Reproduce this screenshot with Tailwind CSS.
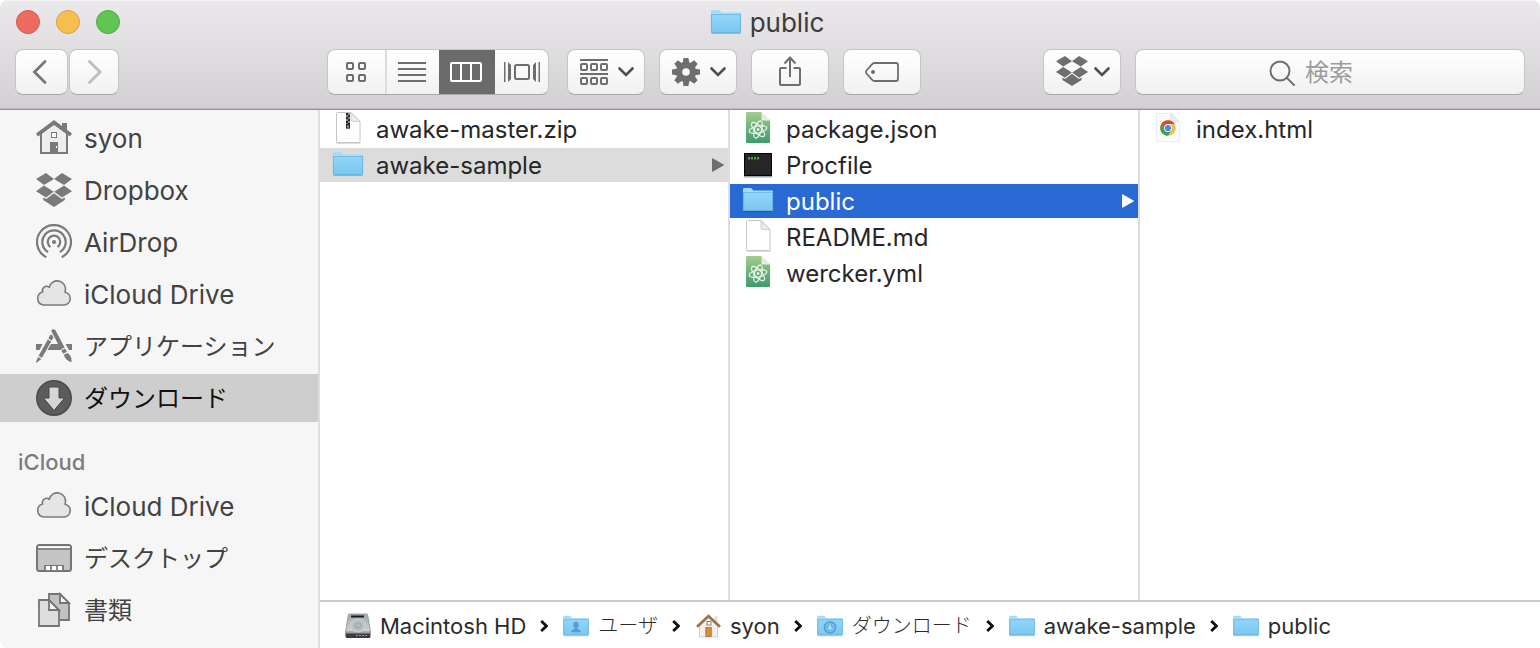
<!DOCTYPE html>
<html lang="ja">
<head>
<meta charset="utf-8">
<title>public</title>
<script src="https://cdn.jsdelivr.net/npm/@tailwindcss/browser@4"></script>
</head>
<body class="bg-white font-['Inter','Noto_Sans_CJK_JP',sans-serif]">
<svg class="absolute size-0" aria-hidden="true">
  <defs>
    <linearGradient id="gFolder" x1="0" y1="0" x2="0" y2="1"><stop offset="0" stop-color="#93d5f9"/><stop offset="1" stop-color="#7ac6f1"/></linearGradient>
    <linearGradient id="gAtom" x1="0" y1="0" x2="0" y2="1"><stop offset="0" stop-color="#a3cd8c"/><stop offset="1" stop-color="#3f9a70"/></linearGradient>
    <linearGradient id="gDisk" x1="0" y1="0" x2="0" y2="1"><stop offset="0" stop-color="#a4aaac"/><stop offset="1" stop-color="#cdd3d5"/></linearGradient>
    <symbol id="folder" viewBox="0 0 32 26" preserveAspectRatio="xMidYMin">
      <path d="M1.500 24.400h29" stroke="#000" stroke-opacity=".22" stroke-width="1.200"/>
      <path d="M1 2.200Q1 1 2.200 1H8.400q.8 0 1.300.6l1.100 1.300q.5.6 1.300.6H30q1 0 1 1V23H1z" fill="#a4dbf9"/>
      <path d="M1 5.500h30V23q0 1-1 1H2q-1 0-1-1z" fill="url(#gFolder)"/>
      <path d="M1 5.500h30" stroke="#69b6e2" stroke-width=".8"/>
      <path d="M1.400 5V22.800q0 .8.8.8h27.600q.8 0 .8-.8V5" fill="none" stroke="#62b0dc" stroke-width=".8"/>
    </symbol>
    <symbol id="page" viewBox="0 0 32 34" preserveAspectRatio="xMidYMin">
      <path d="M4.500 31h24" stroke="#000" stroke-opacity=".25"/>
      <path d="M4.500 1.500q0-1 1-1H19L28 9.500V29.500q0 1-1 1H5.500q-1 0-1-1z" fill="#fff" stroke="#c4c4c4"/>
      <path d="M19 .8V8q0 1.500 1.500 1.500H28z" fill="#ececec" stroke="#c8c8c8" stroke-width=".8"/>
    </symbol>
    <symbol id="atom" viewBox="0 0 32 34" preserveAspectRatio="xMidYMin">
      <path d="M4 1q0-1 1-1H19.500L28 8.500V30q0 1-1 1H5q-1 0-1-1z" fill="url(#gAtom)"/>
      <path d="M19.500 0V7.500q0 1 1 1H28z" fill="#e6efdf"/>
      <g fill="none" stroke="#f1faf2" stroke-width="1.100">
        <ellipse cx="16" cy="17.500" rx="9" ry="3.500" transform="rotate(-12 16 17.500)"/>
        <ellipse cx="16" cy="17.500" rx="9" ry="3.500" transform="rotate(48 16 17.500)"/>
        <ellipse cx="16" cy="17.500" rx="9" ry="3.500" transform="rotate(108 16 17.500)"/>
      </g>
      <circle cx="16" cy="17.500" r="1.300" fill="#fff"/>
    </symbol>
    <symbol id="cloud" viewBox="0 0 36 36" preserveAspectRatio="xMidYMin">
      <path d="M7.500 29A6.600 6.600 0 0 1 6.600 16.100A4.300 4.300 0 0 1 13.300 11.300A8 8 0 0 1 29.300 14.800Q29.300 15.600 29.100 16.200A6.500 6.500 0 0 1 28.500 29z" fill="#e5e5e5" stroke="#7a7a7a" stroke-width="1.600" stroke-linejoin="round"/>
    </symbol>
    <symbol id="dropbox" viewBox="0 0 36 36" preserveAspectRatio="xMidYMin">
      <path d="M0 7L10 1 18 7 8 13zM36 7L26 1 18 7 28 13zM0 19.200L8 13.400 17.800 19.700 10 25.600zM36 19.200L28 13.400 18.200 19.700 26 25.600zM18 21.200L25.800 27 28.800 25.600V28L18 35 7.200 28V25.600L10.200 27z"/>
    </symbol>
    <symbol id="chevdown" viewBox="0 0 16 10"><path d="M1.500 1.500L8 8 14.500 1.500" fill="none" stroke="#4e4e4e" stroke-width="2.600" stroke-linecap="round"/></symbol>
    <symbol id="sep" viewBox="0 0 8 12"><path d="M1.200 1L6.400 6 1.200 11" fill="none" stroke="#111" stroke-width="2.800"/></symbol>
  </defs>
</svg>

<div class="flex min-h-screen flex-col overflow-hidden rounded-lg bg-white">
  <header class="flex h-[110px] flex-none flex-col border-b border-[#939193] bg-gradient-to-b from-[#ece9ec] to-[#d2d0d3] shadow-[inset_0_1px_0_#f6f5f6,inset_0_-1px_0_#bebcbe]">
    <div class="grid h-[46px] flex-none grid-cols-[1fr_auto_1fr] items-center pl-4 pr-[22px]">
      <div class="flex gap-4 pb-[2px]">
        <button aria-label="閉じる" class="size-6 rounded-full border border-[#d9564c] bg-[#ec6a5f]"></button>
        <button aria-label="しまう" class="size-6 rounded-full border border-[#d9a03f] bg-[#f5bf4f]"></button>
        <button aria-label="拡大" class="size-6 rounded-full border border-[#4dab3f] bg-[#61c554]"></button>
      </div>
      <h1 class="flex items-center gap-2 text-[26px] leading-8 text-[#3d3b3d]"><svg class="h-7 w-8"><use href="#folder"/></svg>public</h1>
    </div>

    <div class="flex h-[52px] flex-none items-center px-[15px]">
      <div class="flex gap-px">
        <button aria-label="戻る" class="flex h-[46px] w-[53px] items-center justify-center rounded-lg border border-[#c6c4c7] border-b-[#a9a7aa] bg-gradient-to-b from-white to-[#f1f1f1] pr-1"><svg class="h-6 w-4" viewBox="0 0 16 24" fill="none" stroke="#777" stroke-width="2.800" stroke-linecap="round"><path d="M13 1.500L2.500 12 13 22.500"/></svg></button>
        <button aria-label="進む" class="flex h-[46px] w-[50px] items-center justify-center rounded-lg border border-[#c6c4c7] border-b-[#a9a7aa] bg-gradient-to-b from-white to-[#f1f1f1]"><svg class="h-6 w-4" viewBox="0 0 16 24" fill="none" stroke="#bdbdbd" stroke-width="2.800" stroke-linecap="round"><path d="M3.500 1.500L14 12 3.500 22.500"/></svg></button>
      </div>

      <div class="ml-[208px] flex h-[46px] w-[222px] overflow-hidden rounded-lg border border-[#c6c4c7] border-b-[#a9a7aa] bg-gradient-to-b from-white to-[#f1f1f1]">
        <button aria-label="アイコン" class="flex w-[59px] items-center justify-center border-r-2 border-[#dcdcdc] pr-[2px]"><svg class="h-5 w-5" viewBox="0 0 20 20" fill="none" stroke="#6e6e6e" stroke-width="2"><rect x="1" y="1" width="6" height="6" rx="1"/><rect x="13" y="1" width="6" height="6" rx="1"/><rect x="1" y="13" width="6" height="6" rx="1"/><rect x="13" y="13" width="6" height="6" rx="1"/></svg></button>
        <button aria-label="リスト" class="flex w-[52px] items-center justify-center pr-[2px]"><svg class="h-5 w-7" viewBox="0 0 28 20" stroke="#6e6e6e" stroke-width="2"><path d="M0 1h28M0 7h28M0 13h28M0 19h28"/></svg></button>
        <button aria-label="カラム" aria-pressed="true" class="flex w-14 items-center justify-center bg-[#6b6b6b] pr-[2px]"><svg class="h-5 w-8" viewBox="0 0 32 20"><rect width="32" height="20" rx="2" fill="#fff"/><path fill="#6b6b6b" d="M2 2h8v16H2zM12 2h8v16h-8zM22 2h8v16h-8z"/></svg></button>
        <button aria-label="Cover Flow" class="flex flex-1 items-center justify-center"><svg class="h-5 w-9" viewBox="0 0 36 20" fill="#6e6e6e"><path d="M0 0h1.500v20H0zM34.500 0h1.500v20h-1.500zM4 0L7 3V17L4 20zM32 0L29 3V17L32 20z"/><rect x="11" y="3" width="14" height="14" rx="1.500" fill="none" stroke="#6e6e6e" stroke-width="2"/></svg></button>
      </div>

      <div class="ml-[18px] flex gap-[14px]">
        <button aria-label="表示順序" class="flex h-[46px] w-[78px] items-center justify-center gap-[10px] rounded-lg border border-[#c6c4c7] border-b-[#a9a7aa] bg-gradient-to-b from-white to-[#f1f1f1] pl-[2px]"><svg class="h-[26px] w-7" viewBox="0 0 28 26" fill="none" stroke="#6e6e6e" stroke-width="2"><path d="M0 1h28M0 15h28"/><rect x="1" y="5" width="6" height="6" rx="1"/><rect x="11" y="5" width="6" height="6" rx="1"/><rect x="21" y="5" width="6" height="6" rx="1"/><rect x="1" y="19" width="6" height="6" rx="1"/><rect x="11" y="19" width="6" height="6" rx="1"/><rect x="21" y="19" width="6" height="6" rx="1"/></svg><svg class="h-[10px] w-4"><use href="#chevdown"/></svg></button>
        <button aria-label="アクション" class="flex h-[46px] w-[78px] items-center justify-center gap-[10px] rounded-lg border border-[#c6c4c7] border-b-[#a9a7aa] bg-gradient-to-b from-white to-[#f1f1f1] pl-[2px]"><svg class="size-7" viewBox="-14 -14 28 28"><circle r="7" fill="none" stroke="#6e6e6e" stroke-width="6.400"/><g fill="#6e6e6e"><path id="tooth" d="M-3.200 -9L-2.500 -14H2.500L3.200 -9z"/><use href="#tooth" transform="rotate(45)"/><use href="#tooth" transform="rotate(90)"/><use href="#tooth" transform="rotate(135)"/><use href="#tooth" transform="rotate(180)"/><use href="#tooth" transform="rotate(225)"/><use href="#tooth" transform="rotate(270)"/><use href="#tooth" transform="rotate(315)"/></g></svg><svg class="h-[10px] w-4"><use href="#chevdown"/></svg></button>
        <button aria-label="共有" class="flex h-[46px] w-[78px] items-center justify-center rounded-lg border border-[#c6c4c7] border-b-[#a9a7aa] bg-gradient-to-b from-white to-[#f1f1f1]"><svg class="h-8 w-6" viewBox="0 0 24 32" fill="none" stroke="#6e6e6e" stroke-width="2"><path d="M8.500 12H3q-1 0-1 1V28q0 1 1 1H21q1 0 1-1V13q0-1-1-1H15.500M12 21V1.500M6.500 7.500L12 1.500 17.500 7.500"/></svg></button>
        <button aria-label="タグ" class="flex h-[46px] w-[78px] items-center justify-center rounded-lg border border-[#c6c4c7] border-b-[#a9a7aa] bg-gradient-to-b from-white to-[#f1f1f1]"><svg class="h-5 w-[34px]" viewBox="0 0 34 20"><path d="M9.500 1H31q2 0 2 2V17q0 2-2 2H9.500q-1.200 0-2-.8L1.500 11.500q-1-1.500 0-3L7.500 1.800q.8-.8 2-.8z" fill="none" stroke="#6e6e6e" stroke-width="1.800"/><circle cx="8" cy="10" r="2" fill="#6e6e6e"/></svg></button>
      </div>

      <div class="flex-1"></div>
      <button aria-label="Dropbox" class="flex h-[46px] w-[78px] items-center justify-center gap-[6px] rounded-lg border border-[#c6c4c7] border-b-[#a9a7aa] bg-gradient-to-b from-white to-[#f1f1f1] pl-[2px]"><svg class="h-[34px] w-8 fill-[#6e6e6e]"><use href="#dropbox"/></svg><svg class="h-[10px] w-4"><use href="#chevdown"/></svg></button>
      <label class="ml-[14px] flex h-[46px] w-[390px] items-center justify-center gap-[10px] rounded-lg border border-[#c6c4c7] border-b-[#a9a7aa] bg-gradient-to-b from-white to-[#f1f1f1] pt-[2px]">
        <svg class="size-[26px] flex-none" viewBox="0 0 26 26" fill="none" stroke="#6e6e6e" stroke-width="1.900" stroke-linecap="round"><circle cx="11" cy="11" r="9.500"/><path d="M17.800 17.800L25 25"/></svg>
        <input type="text" aria-label="検索" placeholder="検索" class="w-[86px] bg-transparent text-[24px] leading-8 outline-none placeholder:text-[#9c9c9c]">
      </label>
    </div>
  </header>

  <div class="flex flex-1">
    <nav class="flex w-[320px] flex-none flex-col gap-1 border-r-2 border-[#dedede] bg-[#f6f6f6] pt-1 text-[26px] leading-8 text-[#424242]">
      <a href="#" class="flex h-12 items-center gap-3 pl-9 pt-[2px]"><svg class="h-[38px] w-9" viewBox="0 0 36 36" preserveAspectRatio="xMidYMin" fill="#7a7a7a"><path d="M5 13V33H31V13L18 3z" fill="#eee" stroke="#7a7a7a" stroke-width="2"/><path d="M0 13.500L18 0 26 6V3h5v6.700L36 13.500 34 16.500 18 5 2 16.500z"/><rect x="15.500" y="12.500" width="5" height="5" fill="#fff" stroke="#7a7a7a"/><path d="M14 22h8V33h-8z"/><path d="M20 26h1v2h-1z" fill="#fff"/></svg>syon</a>
      <a href="#" class="flex h-12 items-center gap-3 pl-9 pt-[2px]"><svg class="h-[38px] w-9 fill-[#7a7a7a]"><use href="#dropbox"/></svg>Dropbox</a>
      <a href="#" class="flex h-12 items-center gap-3 pl-9 pt-[2px]"><svg class="h-[38px] w-9" viewBox="0 0 36 36" preserveAspectRatio="xMidYMin" fill="none" stroke="#7a7a7a" stroke-width="2.200"><path d="M10.300 33.200A17 17 0 1 1 25.700 33.200M12.100 28.100A11.700 11.700 0 1 1 23.900 28.100M14.500 23A6.200 6.200 0 1 1 21.500 23"/><circle cx="18" cy="18" r="2.100" fill="#7a7a7a" stroke="none"/></svg>AirDrop</a>
      <a href="#" class="flex h-12 items-center gap-3 pl-9 pt-[2px]"><svg class="h-[38px] w-9"><use href="#cloud"/></svg>iCloud Drive</a>
      <a href="#" class="flex h-12 items-center gap-3 pl-9 pt-[2px] text-[24px]"><svg class="h-[38px] w-9" viewBox="0 0 36 36" preserveAspectRatio="xMidYMin" fill="#7a7a7a"><path d="M0 16H6.500L3.500 22H0zM15 16H22.500L25.500 22H11.500zM29.500 16H36V22H33z"/><path d="M15.200 2.800Q17.500 0 19.600 2.600L28.600 19.500 24.800 21.500z"/><path d="M25.300 22.500L29.100 20.500 30.900 23.800 27.200 25.800z"/><path d="M27.900 26.800L31.500 24.900Q36.500 28 35.300 34.200Q29 32.500 27.900 26.800z"/><path d="M15.700 6.500L17.500 9.500 15.800 12.500 12.400 10.500 14 7.300zM11.800 11.500L15.200 13.500 6 29.800 2.500 28zM2 29L5.300 31 .6 34.800Q0 35 .1 34z"/></svg>アプリケーション</a>
      <a href="#" aria-current="page" class="flex h-12 items-center gap-3 bg-[#cecece] pl-9 pt-[2px] text-[24px] text-[#111]"><svg class="h-[38px] w-9" viewBox="0 0 36 36" preserveAspectRatio="xMidYMin"><circle cx="18" cy="18" r="17.200" fill="#5c5c5c" stroke="#4c4c4c" stroke-width="1.600"/><path d="M13 7H23V18H28.500L18 30.500 7.500 18H13z" fill="#d6d6d6" stroke="#474747"/></svg>ダウンロード</a>
      <h2 class="mt-5 h-8 pl-[18px] text-[22px] font-medium leading-8 text-[#7c7c7c]">iCloud</h2>
      <a href="#" class="flex h-12 items-center gap-3 pl-9 pt-[2px]"><svg class="h-[38px] w-9"><use href="#cloud"/></svg>iCloud Drive</a>
      <a href="#" class="flex h-12 items-center gap-3 pl-9 pt-[2px] text-[24px]"><svg class="h-[38px] w-9" viewBox="0 0 36 36" preserveAspectRatio="xMidYMin"><rect x="1" y="5" width="34" height="26" rx="2.500" fill="#c4c4c4" stroke="#757575" stroke-width="2"/><path d="M2 6.200H34V8H2z" fill="#fff"/><path d="M1 9h34" stroke="#757575" stroke-width="1.600"/><path d="M8.500 31V25.500H27.500V31z" fill="#8a8a8a" stroke="#757575"/><path d="M10 26h4v4h-4zM16 26h4v4h-4zM22 26h4v4h-4z" fill="#fff"/></svg>デスクトップ</a>
      <a href="#" class="flex h-12 items-center gap-3 pl-9 pt-[2px] text-[24px]"><svg class="h-[38px] w-9" viewBox="0 0 36 36" preserveAspectRatio="xMidYMin" stroke="#757575" stroke-width="1.800"><path d="M13 2H24L33 11V28H13z" fill="#c2c2c2"/><path d="M24 2V11H33z" fill="#f4f4f4"/><path d="M3 8H13L23 18V34H3z" fill="#dedede"/><path d="M13 8V18H23z" fill="#f4f4f4"/></svg>書類</a>
    </nav>

    <main class="flex min-w-0 flex-1 flex-col">
      <div class="flex flex-1 text-[24px] leading-8 text-[#262626]">
        <ul class="flex w-[410px] flex-none flex-col gap-[2px] border-r-2 border-[#dedede] pt-[2px]">
          <li><button class="flex h-[34px] w-full items-center gap-3 pl-3 pt-[2px] text-left"><svg class="h-9 w-8" viewBox="0 0 32 34" preserveAspectRatio="xMidYMin"><use href="#page"/><path d="M14 1h4v15.500h-4z" fill="#8a8a8a"/><path d="M14 1h2v2h-2zM16 3h2v2h-2zM14 5h2v2h-2zM16 7h2v2h-2zM14 9h2v2h-2zM16 11h2v2h-2zM14 12h4v4.500h-4z" fill="#222"/><path d="M15.300 13.500h1.400v2h-1.400z" fill="#ddd"/></svg>awake-master.zip</button></li>
          <li><button class="flex h-[34px] w-full items-center gap-3 bg-[#dcdcdc] pl-3 pr-1 pt-[2px] text-left"><svg class="h-[30px] w-8"><use href="#folder"/></svg><span class="flex-1">awake-sample</span><svg class="h-4 w-3" viewBox="0 0 12 14" preserveAspectRatio="xMidYMin"><path d="M0 1Q0 0 1 .4L11.500 6.400Q12.300 7 11.500 7.600L1 13.600Q0 14 0 13z" fill="#6e6e6e"/></svg></button></li>
        </ul>
        <ul class="flex w-[410px] flex-none flex-col gap-[2px] border-r-2 border-[#dedede] pt-[2px]">
          <li><button class="flex h-[34px] w-full items-center gap-3 pl-3 pt-[2px] text-left"><svg class="h-9 w-8"><use href="#atom"/></svg>package.json</button></li>
          <li><button class="flex h-[34px] w-full items-center gap-3 pl-3 pt-[2px] text-left"><svg class="h-9 w-8" viewBox="0 0 32 34" preserveAspectRatio="xMidYMin"><path d="M2 28.500h28" stroke="#000" stroke-opacity=".35" stroke-width="2"/><rect x="2.500" y="5.500" width="27" height="22" fill="#262626" stroke="#050505"/><path d="M6 9h2v2.500H6zM9 9h2v2.500H9zM12 9h2v2.500h-2zM15 9h2v2.500h-2z" fill="#4f9c53"/></svg>Procfile</button></li>
          <li><button class="flex h-[34px] w-full items-center gap-3 bg-[#2969d4] pl-3 pr-1 pt-[2px] text-left text-white"><svg class="h-[30px] w-8"><use href="#folder"/></svg><span class="flex-1">public</span><svg class="h-4 w-3" viewBox="0 0 12 14" preserveAspectRatio="xMidYMin"><path d="M0 1Q0 0 1 .4L11.500 6.400Q12.300 7 11.500 7.600L1 13.600Q0 14 0 13z" fill="#fff"/></svg></button></li>
          <li><button class="flex h-[34px] w-full items-center gap-3 pl-3 pt-[2px] text-left"><svg class="h-9 w-8"><use href="#page"/></svg>README.md</button></li>
          <li><button class="flex h-[34px] w-full items-center gap-3 pl-3 pt-[2px] text-left"><svg class="h-9 w-8"><use href="#atom"/></svg>wercker.yml</button></li>
        </ul>
        <ul class="flex flex-1 flex-col gap-[2px] pt-[2px]">
          <li><button class="flex h-[34px] w-full items-center gap-3 pl-3 pt-[2px] text-left"><svg class="h-9 w-8" viewBox="0 0 32 34" preserveAspectRatio="xMidYMin"><path d="M4.500 1.500H19L27.500 10V29.500H4.500z" fill="#fcfcfc" stroke="#ececec"/><path d="M19 1.500V10H27.500z" fill="#ededed" stroke="#e2e2e2"/><circle cx="16" cy="16" r="7.800" fill="#e9c443"/><path d="M9.250 12.100A7.800 7.800 0 0 0 16 23.800L19.400 17.900 12.600 17.900z" fill="#3f9e57"/><path d="M9.250 12.100A7.800 7.800 0 0 1 22.750 12.100H16L12.600 17.900z" fill="#d9483b"/><circle cx="16" cy="16" r="3.900" fill="#fff"/><circle cx="16" cy="16" r="3.100" fill="#4c87ee"/></svg>index.html</button></li>
        </ul>
      </div>

      <nav aria-label="パス" class="flex h-12 flex-none items-center gap-[14px] border-t-2 border-[#cbcbcb] pl-6 pt-[2px] text-[22px] leading-8 text-[#2b2b2b]">
        <a href="#" class="flex items-center gap-2"><svg class="h-[26px] w-7" viewBox="0 0 28 26"><path d="M5.500 1H22.500Q23.500 1 23.700 2L26.500 19H1.500L4.300 2Q4.500 1 5.500 1z" fill="url(#gDisk)" stroke="#8b9092" stroke-width=".8"/><path d="M1.500 19H26.500V23.500Q26.500 25 25 25H3Q1.500 25 1.500 23.500z" fill="#3a3c3d"/><path d="M1.500 18.500h25v2h-25z" fill="#9a9fa1"/><path d="M7 2.500H20V4.500H7z" fill="#1b1b1b"/><ellipse cx="14" cy="12.500" rx="7.500" ry="6.500" fill="#bcc2c4" stroke="#d3d8d9" stroke-width=".8"/><ellipse cx="14" cy="12.500" rx="3.300" ry="2.800" fill="#b2b8ba" stroke="#979d9f" stroke-width=".7"/><path d="M12 22.500h2M15 22.500h2M18 22.500h2M21 22.500h2" stroke="#999"/></svg>Macintosh HD</a>
        <svg class="h-3 w-2 flex-none"><use href="#sep"/></svg>
        <a href="#" class="flex items-center gap-2 text-[20px] font-light"><svg class="h-[22px] w-7" viewBox="0 0 32 26"><use href="#folder"/><path d="M10 20.500q0-3 4.300-4v-1.500q-1.500-1.300-1.500-3.500 0-3.500 3.200-3.500t3.200 3.500q0 2.200-1.500 3.500V16.500q4.300 1 4.300 4z" fill="#4e9fd0"/></svg>ユーザ</a>
        <svg class="h-3 w-2 flex-none"><use href="#sep"/></svg>
        <a href="#" class="flex items-center gap-2"><svg class="h-6 w-7" viewBox="0 0 28 24"><path d="M5.500 12V23H23.500V12L14.500 4z" fill="#f3f1ee" stroke="#c9c5c0" stroke-width=".8"/><path d="M20.500 2h3v7h-3z" fill="#e4e0da"/><path d="M3 12.800L14.500 2 26 12.800" fill="none" stroke="#9b714c" stroke-width="2.600"/><rect x="13" y="7.500" width="4" height="3.500" fill="#fff" stroke="#9a8063"/><rect x="11.800" y="13.500" width="5.500" height="9" fill="#dd8a34" stroke="#b07237" stroke-width=".8"/></svg>syon</a>
        <svg class="h-3 w-2 flex-none"><use href="#sep"/></svg>
        <a href="#" class="flex items-center gap-2 text-[20px] font-light"><svg class="h-[22px] w-7" viewBox="0 0 32 26"><use href="#folder"/><circle cx="16" cy="14.500" r="6.600" fill="#7cc4ee" stroke="#4e9fd0" stroke-width="1.800"/><path d="M14.200 10.500h3.600v3.700h2.700L16 19l-4.500-4.800h2.700z" fill="#a9dcf7" stroke="#4e9fd0" stroke-width=".8"/></svg>ダウンロード</a>
        <svg class="h-3 w-2 flex-none"><use href="#sep"/></svg>
        <a href="#" class="flex items-center gap-2"><svg class="h-[22px] w-7"><use href="#folder"/></svg>awake-sample</a>
        <svg class="h-3 w-2 flex-none"><use href="#sep"/></svg>
        <a href="#" class="flex items-center gap-2"><svg class="h-[22px] w-7"><use href="#folder"/></svg>public</a>
      </nav>
    </main>
  </div>
</div>
</body>
</html>
